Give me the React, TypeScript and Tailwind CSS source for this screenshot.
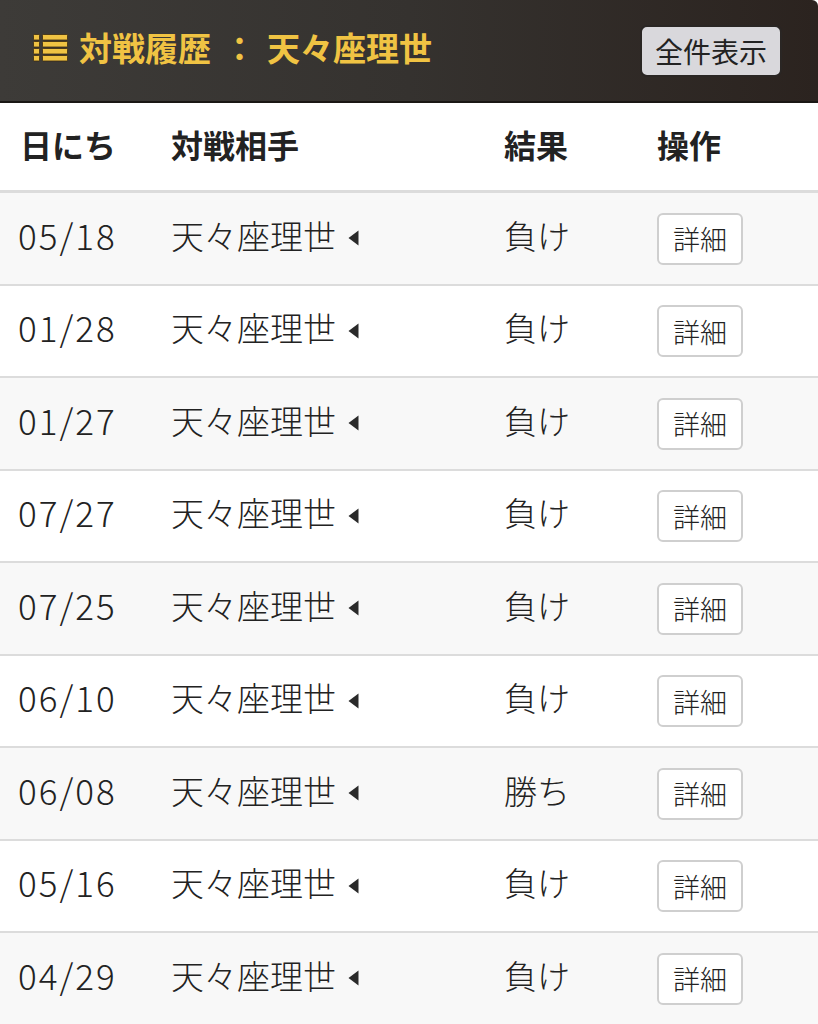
import React from 'react';

type Match = {
  date: string;
  opponent: string;
  result: string;
};

const matches: Match[] = [
  { date: '05/18', opponent: '天々座理世', result: '負け' },
  { date: '01/28', opponent: '天々座理世', result: '負け' },
  { date: '01/27', opponent: '天々座理世', result: '負け' },
  { date: '07/27', opponent: '天々座理世', result: '負け' },
  { date: '07/25', opponent: '天々座理世', result: '負け' },
  { date: '06/10', opponent: '天々座理世', result: '負け' },
  { date: '06/08', opponent: '天々座理世', result: '勝ち' },
  { date: '05/16', opponent: '天々座理世', result: '負け' },
  { date: '04/29', opponent: '天々座理世', result: '負け' },
];

const ListIcon: React.FC = () => (
  <svg width="35" height="28" viewBox="0 0 35 28" className="shrink-0">
    {[0.5, 7.5, 14.5, 21.5].map(y => (
      <g key={y}>
        <rect x="0.5" y={y} width="6" height="5.5" rx="0.8" fill="#f0c343" stroke="#3a2a10" strokeWidth="0.8" />
        <rect x="9.5" y={y} width="25" height="5.5" rx="0.8" fill="#f0c343" stroke="#3a2a10" strokeWidth="0.8" />
      </g>
    ))}
  </svg>
);

const Caret: React.FC = () => (
  <svg width="11" height="16" viewBox="0 0 11 16" className="ml-[12px] mt-[6px] shrink-0">
    <path d="M10.5 0.5 L0.5 8 L10.5 15.5 Z" fill="#2a2a2a" />
  </svg>
);

export default function App() {
  return (
    <div
      className="w-[818px] min-h-[1024px] bg-white text-[#222]"
      style={{ fontFamily: '"Noto Sans CJK JP", "Noto Sans", sans-serif' }}
    >
      <div className="h-[103px] flex items-center justify-between pl-[33px] pr-[36px] bg-gradient-to-r from-[#3d3b38] via-[#35322f] to-[#2b231f] border-b-2 border-[#1a1714] rounded-tr-[6px]">
        <div className="flex items-center gap-[11px] text-[#f0c343] font-bold text-[33px] leading-none -mt-[6px]">
          <ListIcon />
          <span>
            対戦履歴<span className="ml-[12px] mr-[11px]">：</span>天々座理世
          </span>
        </div>
        <button className="h-[52px] px-[13px] rounded-[7px] bg-[#d9d8dc] border-2 border-[#2a2624] text-[#222] text-[28px] leading-none">
          全件表示
        </button>
      </div>

      <div className="grid grid-cols-[153px_333px_153px_1fr] pl-[18px] h-[90px] items-center font-bold text-[32px] border-b-[3px] border-[#dcdcdc]">
        <div className="pl-[2px] -mt-[5px]">日にち</div>
        <div className="-mt-[5px]">対戦相手</div>
        <div className="-mt-[5px]">結果</div>
        <div className="-mt-[5px]">操作</div>
      </div>

      {matches.map((m, i) => (
        <div
          key={i}
          className={`grid grid-cols-[153px_333px_153px_1fr] pl-[18px] h-[92.5px] items-center text-[33px] font-light border-b-2 border-[#dcdcdc] ${
            i % 2 === 0 ? 'bg-[#f8f8f8]' : 'bg-white'
          }`}
        >
          <div className="text-[35px] tracking-[2px] -mt-[7px]">{m.date}</div>
          <div className="flex items-center -mt-[6px]">
            <span>{m.opponent}</span>
            <Caret />
          </div>
          <div className="-mt-[6px]">{m.result}</div>
          <div>
            <button className="w-[86px] h-[52px] rounded-[6px] border-2 border-[#cfcfcf] bg-white text-[27px] leading-none font-light text-[#222]">
              詳細
            </button>
          </div>
        </div>
      ))}
    </div>
  );
}
